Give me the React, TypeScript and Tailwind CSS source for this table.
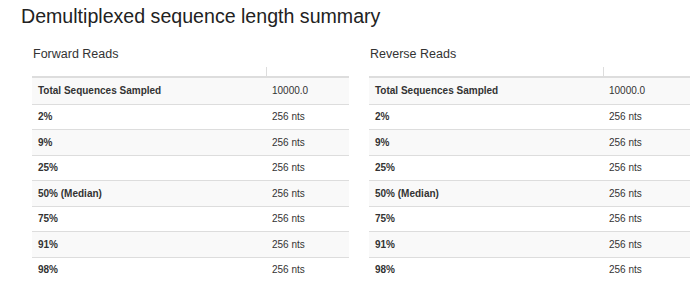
import React from "react";

const rows: [string, string][] = [
  ["Total Sequences Sampled", "10000.0"],
  ["2%", "256 nts"],
  ["9%", "256 nts"],
  ["25%", "256 nts"],
  ["50% (Median)", "256 nts"],
  ["75%", "256 nts"],
  ["91%", "256 nts"],
  ["98%", "256 nts"],
];

function SummaryTable({ title, className }: { title: string; className: string }) {
  return (
    <div className={className}>
      <h3 className="text-[12.5px] leading-[16px] text-[#333] pl-[1px]">{title}</h3>
      <div className="mt-[2px] flex h-[14px] border-b-2 border-[#ddd]">
        <div className="w-[234px]" />
        <div className="flex-1 border-l border-[#ddd] mt-[3px]" />
      </div>
      {rows.map(([label, value], i) => (
        <div
          key={label}
          className={`flex h-[25.5px] items-center text-[10px] text-[#333] ${
            i > 0 ? "border-t border-[#ddd]" : ""
          } ${i % 2 === 0 ? "bg-[#f9f9f9]" : ""}`}
        >
          <div className="w-[234px] pl-[6px] font-bold">{label}</div>
          <div className="pl-[6px]">{value}</div>
        </div>
      ))}
    </div>
  );
}

export default function App() {
  return (
    <div
      className="w-[690px] h-[291px] overflow-hidden bg-white"
      style={{ fontFamily: '"Liberation Sans", Arial, sans-serif' }}
    >
      <h2 className="pl-[21px] pt-[4px] text-[19.6px] leading-[24px] text-[#222]">
        Demultiplexed sequence length summary
      </h2>
      <div className="flex mt-[18px]">
        <SummaryTable title="Forward Reads" className="ml-[32px] w-[317px] shrink-0" />
        <SummaryTable title="Reverse Reads" className="ml-[20px] w-[330px] shrink-0" />
      </div>
    </div>
  );
}
